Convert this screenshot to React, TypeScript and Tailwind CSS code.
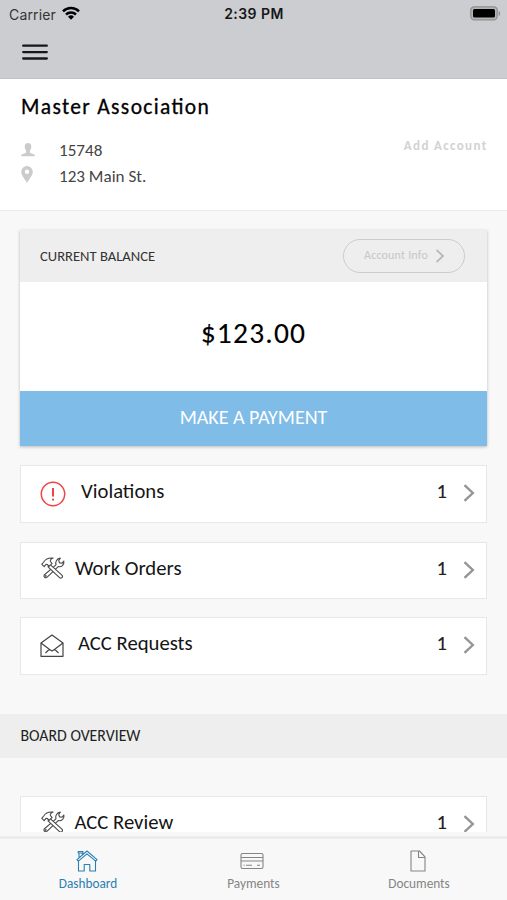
import type { ReactNode } from "react";

function Chevron({ className = "" }: { className?: string }) {
  return (
    <svg viewBox="0 0 12 18" fill="none" stroke="currentColor" strokeWidth="2.4" className={className}>
      <path d="M1.5 1.2 9.8 9 1.5 16.8" />
    </svg>
  );
}

function Tools() {
  return (
    <svg viewBox="0 0 24 22" className="mr-px h-[22px] w-6" fill="white" stroke="#4a4a4a" strokeWidth="1.1" strokeLinejoin="round">
      <path d="M3.2 18 15 7.8c-.9-3.2.8-6.2 4.3-6.7l-1.6 2.6 1 2.2 2.4.2 1.7-2.1c.7 3.8-2.3 6.4-5.6 5.6L5.9 20.3A1.8 1.8 0 0 1 3.2 18Z" />
      <path d="m9.2 7.7 11.7 10.5a1.6 1.6 0 0 1-2.4 2.4L7 9.8Z" />
      <path d="M.8 7.4 2.7 5c1.8-2.9 5-4.4 9.4-3.9-2.6 1-3.5 2.6-2.2 4.1l1.2 1.1-3 3.1-1.8-1.9-1.3-.1-1.8 2.3Z" />
      <circle cx="4.8" cy="18.9" r=".4" />
    </svg>
  );
}

function Alert() {
  return (
    <svg viewBox="0 0 26 26" className="size-[26px]" fill="none" stroke="#ef4444" strokeWidth="1.5">
      <circle cx="13" cy="13" r="11.7" />
      <path d="M13 7v8.5M13 17.8v1.8" strokeWidth="2" />
    </svg>
  );
}

function Envelope() {
  return (
    <svg viewBox="0 0 24 24" className="mr-0.5 size-6" fill="none" stroke="#444" strokeWidth="1.2" strokeLinejoin="round">
      <path d="M1 9 12 1l11 8v13.3H1Z" />
      <path d="m1 9 8.3 6.3L12 17l2.7-1.7L23 9M5.5 19l3.8-3.7M18.5 19l-3.8-3.7" />
    </svg>
  );
}

type RowProps = { icon: ReactNode; label: string; className: string; iconClass?: string; labelClass: string };

function Row({ icon, label, className, iconClass = "pt-[13.5px]", labelClass }: RowProps) {
  return (
    <div className={`mx-5 flex shrink-0 items-start border border-[#e7e7e7] bg-white pr-3 pl-[19px] ${className}`}>
      <div className={`flex w-[26px] shrink-0 justify-center ${iconClass}`}>{icon}</div>
      <span className={`pt-[16px] text-[20.7px] leading-[18px] text-[#151515] ${labelClass}`}>{label}</span>
      <span className="ml-auto pt-[16px] text-[20.6px] leading-[18px] text-[#222] [-webkit-text-stroke:0.1px]">1</span>
      <Chevron className="mt-[18px] mr-[-0.5px] ml-[15.5px] h-[18px] w-3 text-[#959595]" />
    </div>
  );
}

export default function App() {
  return (
    <div className="flex h-[900px] w-[507px] flex-col overflow-hidden bg-[#f8f8f8] font-['Carlito','Lato',sans-serif] text-black">
      <header className="h-[79px] shrink-0 border-b border-[#bfc0c3] bg-[#cccdd1] font-['Inter',sans-serif]">
        <div className="grid h-7 grid-cols-3 items-center pr-[6px] pl-[9px] text-[14px]">
          <div className="flex items-center gap-[6px] text-[#333] tracking-[0.15px]">
            Carrier
            <svg viewBox="0 0 18 14" className="-mt-0.5 h-[14px] w-[18px]" fill="none" stroke="black" strokeWidth="2.5">
              <path d="M1 5.3a11.5 11.5 0 0 1 16 0M4 8.5a7.2 7.2 0 0 1 10 0" />
              <path d="M6 10.8a4.3 4.3 0 0 1 6 0L9 13.8Z" fill="black" stroke="none" />
            </svg>
          </div>
          <div className="-ml-0.5 -mt-px text-center font-semibold tracking-[0.45px] text-[#161616]">2:39 PM</div>
          <svg viewBox="0 0 31 15" className="-mt-0.5 h-[15px] w-[31px] justify-self-end">
            <rect x=".8" y=".8" width="26.4" height="13" rx="3.5" fill="#b4b5b7" stroke="#8f9092" strokeWidth="1.3" />
            <rect x="3" y="3" width="22" height="8.6" rx="1.5" />
            <path d="M28.7 5v5c2-.8 2-4.2 0-5Z" fill="#8f9092" />
          </svg>
        </div>
        <svg viewBox="0 0 26 16" className="mt-[15.5px] ml-[22px] h-4 w-[26px]" stroke="#17171b" strokeWidth="2.3" strokeLinecap="round">
          <path d="M1.2 1.7h23.6M1.2 8.1h23.6M1.2 14.5h23.6" />
        </svg>
      </header>

      <section className="flex h-[132px] shrink-0 justify-between border-b border-[#e9e9e9] bg-white pr-5 pl-[21px]">
        <div>
          <h1 className="pt-[15px] text-[21.5px] leading-[26px] tracking-[1.35px] [-webkit-text-stroke:0.3px] [font-feature-settings:'liga'_1]">Master Association</h1>
          <div className="mt-[17px] grid grid-cols-[38px_auto] items-center text-[17.1px] leading-[26px] text-[#444]">
            <svg viewBox="0 0 14 14" className="size-[14px]" fill="#c9cbcc">
              <path d="M3.7 3.5C3.7 1.2 5 0 7 0s3.3 1.2 3.3 3.5c0 2.2-.8 3.3-1.4 4.1v2.1l4.3 1.8q.6.3.6.8v1H.2v-1q0-.5.6-.8l4.3-1.8V7.6C4.5 6.8 3.7 5.7 3.7 3.5Z" />
            </svg>
            <span className="pt-px leading-[25px]">15748</span>
            <svg viewBox="0 0 12 17" className="-mt-1 h-[17px] w-3" fill="#c9cbcc">
              <path fillRule="evenodd" d="M6 0a5.8 5.8 0 0 1 5.8 5.8C11.8 9.4 8 13.4 6 17 4 13.4.2 9.4.2 5.8A5.8 5.8 0 0 1 6 0Zm0 3.6a2.2 2.2 0 1 0 0 4.4 2.2 2.2 0 0 0 0-4.4Z" />
            </svg>
            <span className="pt-px leading-[25px]">123 Main St.</span>
          </div>
        </div>
        <span className="-mr-[0.5px] pt-[57px] text-[13px] leading-5 font-bold tracking-[1.35px] text-[#d0d3d4]">Add Account</span>
      </section>

      <section className="mx-5 mt-[19px] h-[216px] shrink-0 bg-white shadow-[0_1px_3px_rgba(0,0,0,0.25)]">
        <div className="flex h-[52px] items-center justify-between bg-[#eee] pr-[22px] pl-5">
          <span className="pt-px text-[14.6px] text-[#333]">CURRENT BALANCE</span>
          <div className="flex h-[34px] w-[122px] items-center rounded-full border-[1.5px] border-[#ccc] pl-5 text-[12px] text-[#c5c7c8]">
            <span className="-mt-[3px] w-[64px] whitespace-nowrap tracking-[0.2px]">Account Info</span>
            <Chevron className="ml-[7px] h-[14px] w-[10px] text-[#b8b8b8]" />
          </div>
        </div>
        <div className="flex h-[109px] items-center justify-center pb-[6px] text-[29.5px] tracking-[1.2px] [-webkit-text-stroke:0.1px]">$123.00</div>
        <div className="flex h-[55px] items-center justify-center bg-[#80bce8] pb-[3px] text-[20px] text-white">MAKE A PAYMENT</div>
      </section>

      <Row icon={<Alert />} label="Violations" className="mt-[19px] h-[58px]" iconClass="pt-[15px]" labelClass="pl-[15px]" />
      <Row icon={<Tools />} label="Work Orders" className="mt-[19px] h-[57px]" labelClass="pl-[9px]" />
      <Row icon={<Envelope />} label="ACC Requests" className="mt-[18px] h-[58px]" iconClass="pt-4" labelClass="pl-3" />

      <div className="mt-[39px] flex h-11 shrink-0 items-center bg-[#eee] pl-[20.5px] text-[15.8px] text-[#222]">BOARD OVERVIEW</div>

      <div className="h-[74px] shrink-0 overflow-hidden pt-[38px]">
        <Row icon={<Tools />} label="ACC Review" className="h-9 border-b-0" labelClass="pl-[8.5px]" />
      </div>

      <nav className="mt-1 grid h-[64px] shrink-0 grid-cols-3 border-t-[3px] border-[#ececec] text-[13.3px] text-[#858585]">
        <div className="flex flex-col items-center pt-[11px] pl-[7px] text-[#2c7fb1]">
          <svg viewBox="0 0 22 22" className="mr-[3px] size-[22px]" fill="none" stroke="currentColor" strokeWidth="1.1" strokeLinejoin="round">
            <path d="M2.5 11v10H8.2v-6.5h5.6V21h5.7V11M11 1 1 9.7l1.3 1.5L11 3.8l8.7 7.4L21 9.7ZM3 8V3h3.3v2M2.2 1.5h4.7V3H2.2Z" />
          </svg>
          <span className="pt-px leading-[22px]">Dashboard</span>
        </div>
        <div className="flex flex-col items-center pt-[11px]">
          <svg viewBox="0 0 24 22" className="mr-[3px] h-[22px] w-6" fill="none" stroke="currentColor" strokeWidth="1.1">
            <rect x="1" y="3.5" width="22" height="15" rx="1.5" />
            <path d="M1 7.5h22M1 11h22M3.5 15.2h1.2M6 15.2h6M17 15.2h3" />
          </svg>
          <span className="pt-px leading-[22px]">Payments</span>
        </div>
        <div className="flex flex-col items-center pt-[11px] pr-[7px]">
          <svg viewBox="0 0 16 22" className="mr-[3px] h-[22px] w-4" fill="none" stroke="currentColor" strokeWidth="1.1" strokeLinejoin="round">
            <path d="M1 1h8.5L15 6.8V21H1ZM8.5 1v6.5H15" />
          </svg>
          <span className="pt-px leading-[22px]">Documents</span>
        </div>
      </nav>
    </div>
  );
}
